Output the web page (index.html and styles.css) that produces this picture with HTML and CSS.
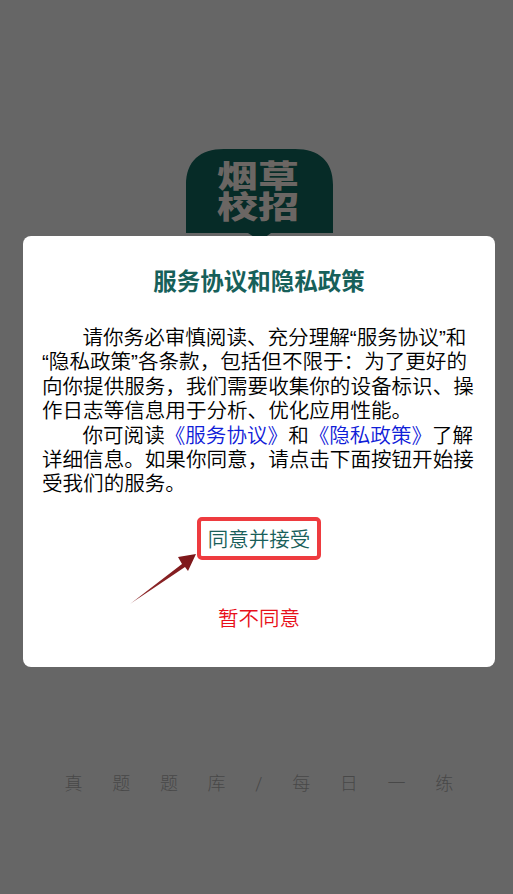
FILE: index.html
```html
<!DOCTYPE html>
<html lang="zh-CN">
<head>
<meta charset="utf-8">
<title>烟草校招</title>
<link rel="stylesheet" href="styles.css">
</head>
<body>
<main class="splash">
  <div class="logo">
    <svg class="logo-shape" width="147" height="92" viewBox="0 0 147 92" aria-hidden="true">
      <path d="M0 84V36C0 12 14 0 38 0H109C133 0 147 12 147 36V84H85L74 92L62 84Z" fill="#062b27"/>
    </svg>
    <div class="logo-text">烟草<br>校招</div>
  </div>
  <p class="tagline">真题题库/每日一练</p>
</main>
<div class="scrim">
  <section class="dialog">
    <h1 class="dialog-title">服务协议和隐私政策</h1>
    <div class="dialog-body">
      <p class="para">请你务必审慎阅读、充分理解“服务协议”和“隐私政策”各条款，包括但不限于：为了更好的向你提供服务，我们需要收集你的设备标识、操作日志等信息用于分析、优化应用性能。</p>
      <p class="para">你可阅读<a class="link">《服务协议》</a>和<a class="link">《隐私政策》</a>了解详细信息。如果你同意，请点击下面按钮开始接受我们的服务。</p>
    </div>
    <div class="actions">
      <div class="agree-wrap">
        <button class="agree">同意并接受</button>
        <svg class="arrow" width="70" height="56" viewBox="0 0 70 56" aria-hidden="true">
          <defs>
            <linearGradient id="arrowFill" x1="0" y1="1" x2="1" y2="0">
              <stop offset="0" stop-color="#b57c7c"/>
              <stop offset="0.15" stop-color="#8f2a2c"/>
              <stop offset="1" stop-color="#7c1518"/>
            </linearGradient>
          </defs>
          <path d="M0 56L52 16L48 9L66 6L58 23L55 19Z" fill="url(#arrowFill)"/>
        </svg>
      </div>
      <button class="decline">暂不同意</button>
    </div>
  </section>
</div>
</body>
</html>
```
FILE: styles.css
```css
* { box-sizing: border-box; }
html, body { margin: 0; height: 100%; }
body {
  background: #666666;
  font-family: "Roboto", "Noto Sans CJK SC", sans-serif;
  overflow: hidden;
}
.splash {
  height: 894px;
  display: flex;
  flex-direction: column;
  align-items: center;
  padding-top: 149px;
}
.logo {
  position: relative;
  width: 147px;
  height: 92px;
  margin-left: 6px;
}
.logo-shape { display: block; }
.logo-text {
  position: absolute;
  top: 12px;
  left: 31px;
  font-size: 41px;
  line-height: 42px;
  font-weight: 900;
  white-space: nowrap;
  color: #6b6663;
  transform: scaleY(0.74);
  transform-origin: top left;
}
.tagline {
  margin: auto 0 98px;
  align-self: flex-start;
  padding-left: 64.5px;
  font-size: 18px;
  line-height: 24px;
  font-weight: 300;
  letter-spacing: 29.7px;
  color: #484848;
  white-space: nowrap;
}
.scrim {
  position: absolute;
  inset: 0;
  padding: 236px 18px 0 23px;
}
.dialog {
  width: 472px;
  height: 431px;
  background: #fff;
  border-radius: 8px;
  padding: 30px 19px 0;
}
.dialog-title {
  margin: 0;
  text-align: center;
  font-size: 23.5px;
  line-height: 32px;
  font-weight: 700;
  color: #17605a;
}
.dialog-body {
  margin-top: 28px;
  font-family: "Liberation Sans", "Noto Sans CJK SC", sans-serif;
  font-size: 20.57px;
  line-height: 24.4px;
  font-weight: 350;
  color: #000;
}
.para {
  margin: 0;
  text-indent: 40.5px;
}
.link { color: #1020d8; }
.actions {
  display: flex;
  flex-direction: column;
  align-items: center;
}
.agree-wrap {
  position: relative;
  margin-top: 20px;
}
.agree {
  display: block;
  width: 124px;
  height: 43px;
  padding: 0;
  background: #fff;
  border: 4px solid #ee3b3f;
  border-radius: 5px;
  font: inherit;
  font-size: 20.5px;
  font-weight: 350;
  color: #19605a;
}
.arrow {
  position: absolute;
  left: -67px;
  top: 31px;
}
.decline {
  margin-top: 42px;
  padding: 0;
  background: none;
  border: 0;
  font: inherit;
  font-size: 20.5px;
  font-weight: 350;
  line-height: 34px;
  color: #e8101a;
}
```
